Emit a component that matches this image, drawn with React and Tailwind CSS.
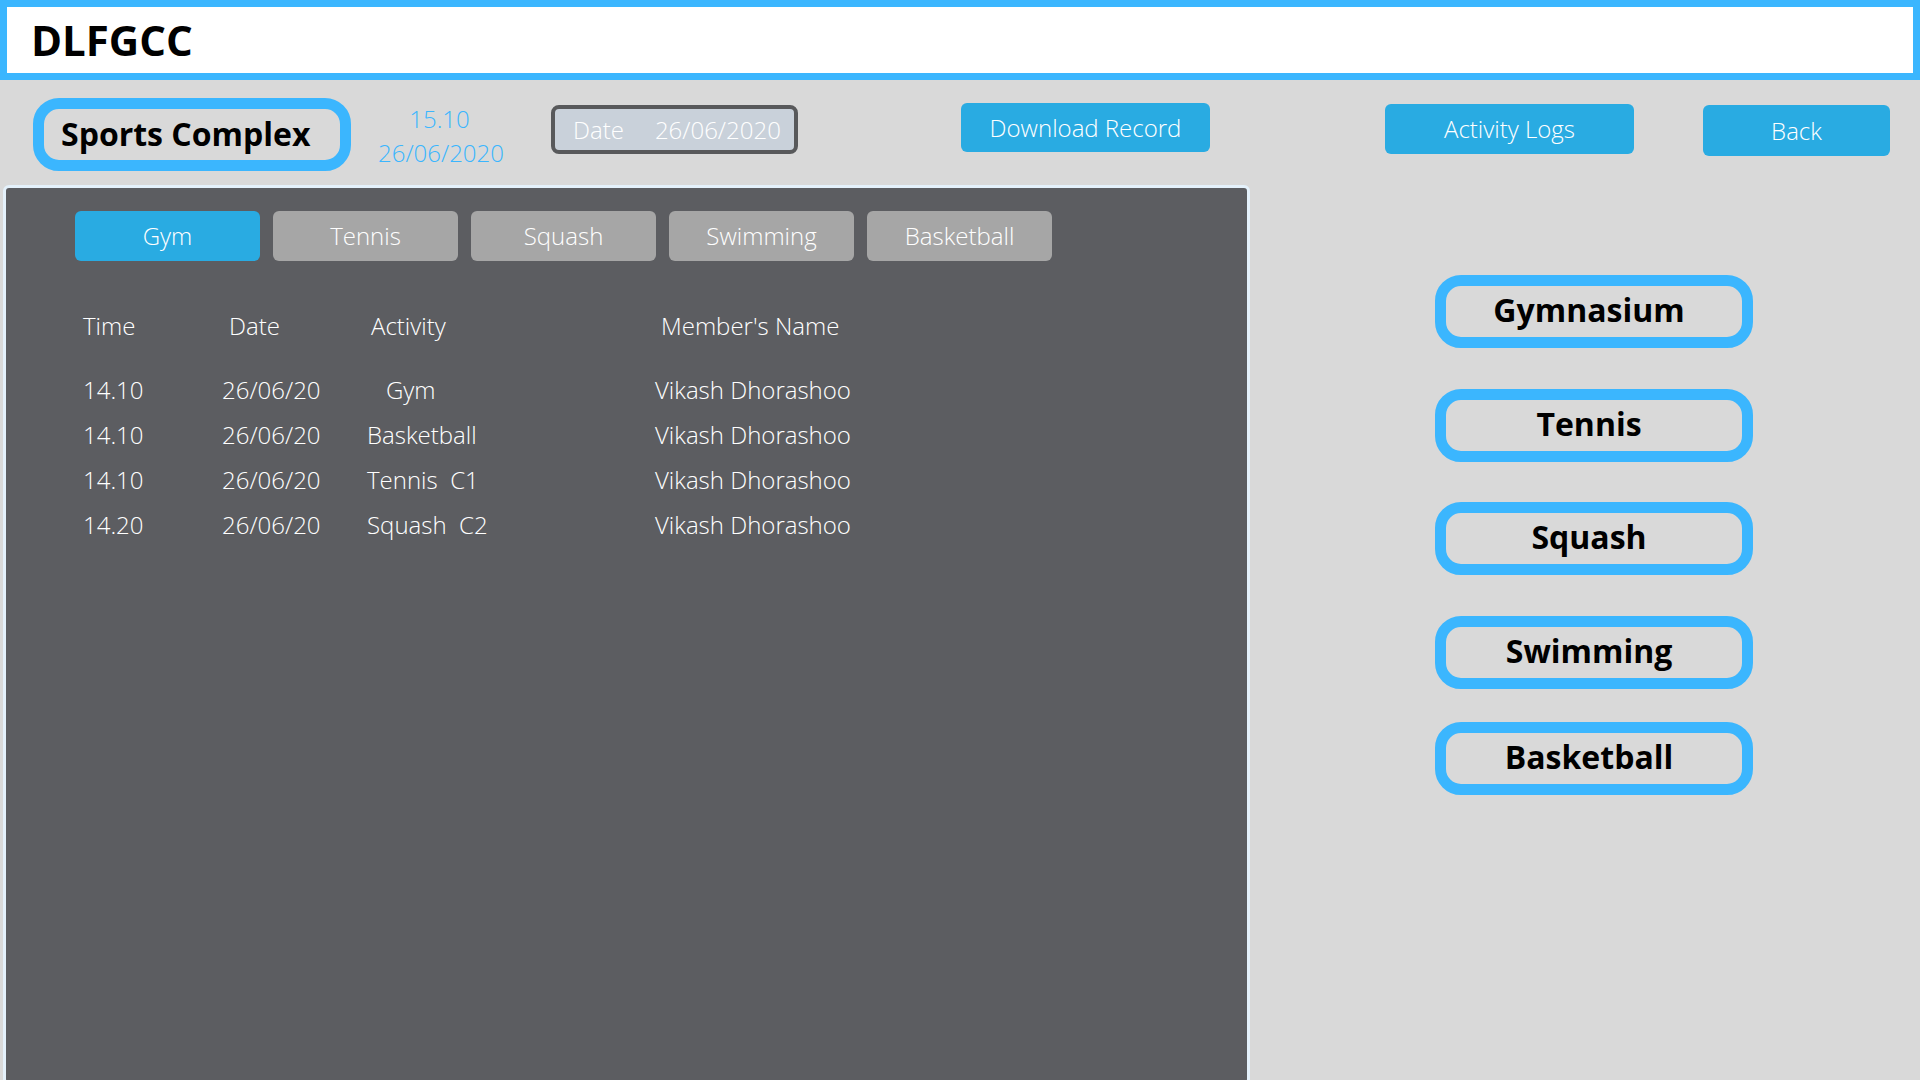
import React from 'react';

export default function App() {
  const tabs = ['Gym', 'Tennis', 'Squash', 'Swimming', 'Basketball'];

  // Demo log rows
  const rows = [
    { time: '14.10', date: '26/06/20', activity: 'Gym', indent: true, name: 'Vikash Dhorashoo' },
    { time: '14.10', date: '26/06/20', activity: 'Basketball', name: 'Vikash Dhorashoo' },
    { time: '14.10', date: '26/06/20', activity: 'Tennis\u00a0\u00a0C1', name: 'Vikash Dhorashoo' },
    { time: '14.20', date: '26/06/20', activity: 'Squash\u00a0\u00a0C2', name: 'Vikash Dhorashoo' },
  ];

  const facilities = [
    { label: 'Gymnasium', mt: 'mt-[90px]' },
    { label: 'Tennis', mt: 'mt-[41px]' },
    { label: 'Squash', mt: 'mt-[40px]' },
    { label: 'Swimming', mt: 'mt-[41px]' },
    { label: 'Basketball', mt: 'mt-[33px]' },
  ];

  return (
    <div className="w-[1920px] h-[1080px] overflow-hidden bg-[#d9d9d9] font-['Open_Sans',sans-serif] flex flex-col">
      <div className="h-[80px] shrink-0 bg-white border-[7px] border-[#3bb6fe] flex items-center pl-[24px]">
        <h1 className="text-[42px] font-bold text-black leading-none">DLFGCC</h1>
      </div>

      <div className="h-[105px] shrink-0 flex items-start pl-[33px]">
        <div className="mt-[18px] w-[318px] h-[73px] rounded-[26px] border-[11px] border-[#3bb6fe] flex items-center pl-[17px]">
          <span className="text-[32px] font-bold text-black leading-none -mt-[2px]">Sports Complex</span>
        </div>
        <div className="mt-[22px] ml-[27px] w-[126px] flex flex-col items-center text-[#3bb6fe] text-[24px] font-light leading-[34px]">
          <span className="-ml-[3px]">15.10</span>
          <span>26/06/2020</span>
        </div>
        <div className="mt-[25px] ml-[47px] w-[247px] h-[49px] rounded-[8px] border-[4px] border-[#58595b] bg-[#c9d1da] flex items-center pl-[18px] text-white text-[24px] font-light">
          <span>Date</span>
          <span className="ml-[31px]">26/06/2020</span>
        </div>
        <button className="mt-[23px] ml-[163px] w-[249px] h-[49px] rounded-[6px] bg-[#29abe2] text-white text-[24px] font-light">
          Download Record
        </button>
        <button className="mt-[24px] ml-[175px] w-[249px] h-[50px] rounded-[6px] bg-[#29abe2] text-white text-[24px] font-light">
          Activity Logs
        </button>
        <button className="mt-[25px] ml-[69px] w-[187px] h-[51px] rounded-[6px] bg-[#29abe2] text-white text-[24px] font-light">
          Back
        </button>
      </div>

      <div className="flex flex-1 min-h-0">
        <div className="ml-[3px] w-[1247px] h-[900px] shrink-0 rounded-[6px] border-[3px] border-[#e4f1fb] bg-[#5c5d61] pt-[23px] pl-[69px]">
          <div className="flex gap-[13px]">
            {tabs.map((tab, i) => (
              <div
                key={tab}
                className={`w-[185px] h-[50px] rounded-[6px] flex items-center justify-center text-white text-[24px] font-light ${i === 0 ? 'bg-[#29abe2]' : 'bg-[#a6a6a6]'}`}
              >
                {tab}
              </div>
            ))}
          </div>

          <div className="mt-[48px] text-white text-[24px] font-light">
            <div className="grid grid-cols-[139px_145px_288px_1fr] h-[34px] leading-[34px] pl-[8px]">
              <span>Time</span>
              <span className="pl-[7px]">Date</span>
              <span className="pl-[4px]">Activity</span>
              <span className="pl-[6px]">Member's Name</span>
            </div>
            <div className="mt-[24px]">
              {rows.map((r, i) => (
                <div key={i} className="grid grid-cols-[139px_145px_288px_1fr] h-[45px] leading-[45px] pl-[8px]">
                  <span>{r.time}</span>
                  <span>{r.date}</span>
                  <span className={r.indent ? 'pl-[19px]' : ''}>{r.activity}</span>
                  <span>{r.name}</span>
                </div>
              ))}
            </div>
          </div>
        </div>

        <div className="ml-[185px] flex flex-col">
          {facilities.map(f => (
            <div
              key={f.label}
              className={`${f.mt} w-[318px] h-[73px] rounded-[26px] border-[11px] border-[#3bb6fe] flex items-center justify-center`}
            >
              <span className="text-[32px] font-bold text-black leading-none -mt-[4px] -ml-[10px]">{f.label}</span>
            </div>
          ))}
        </div>
      </div>
    </div>
  );
}
